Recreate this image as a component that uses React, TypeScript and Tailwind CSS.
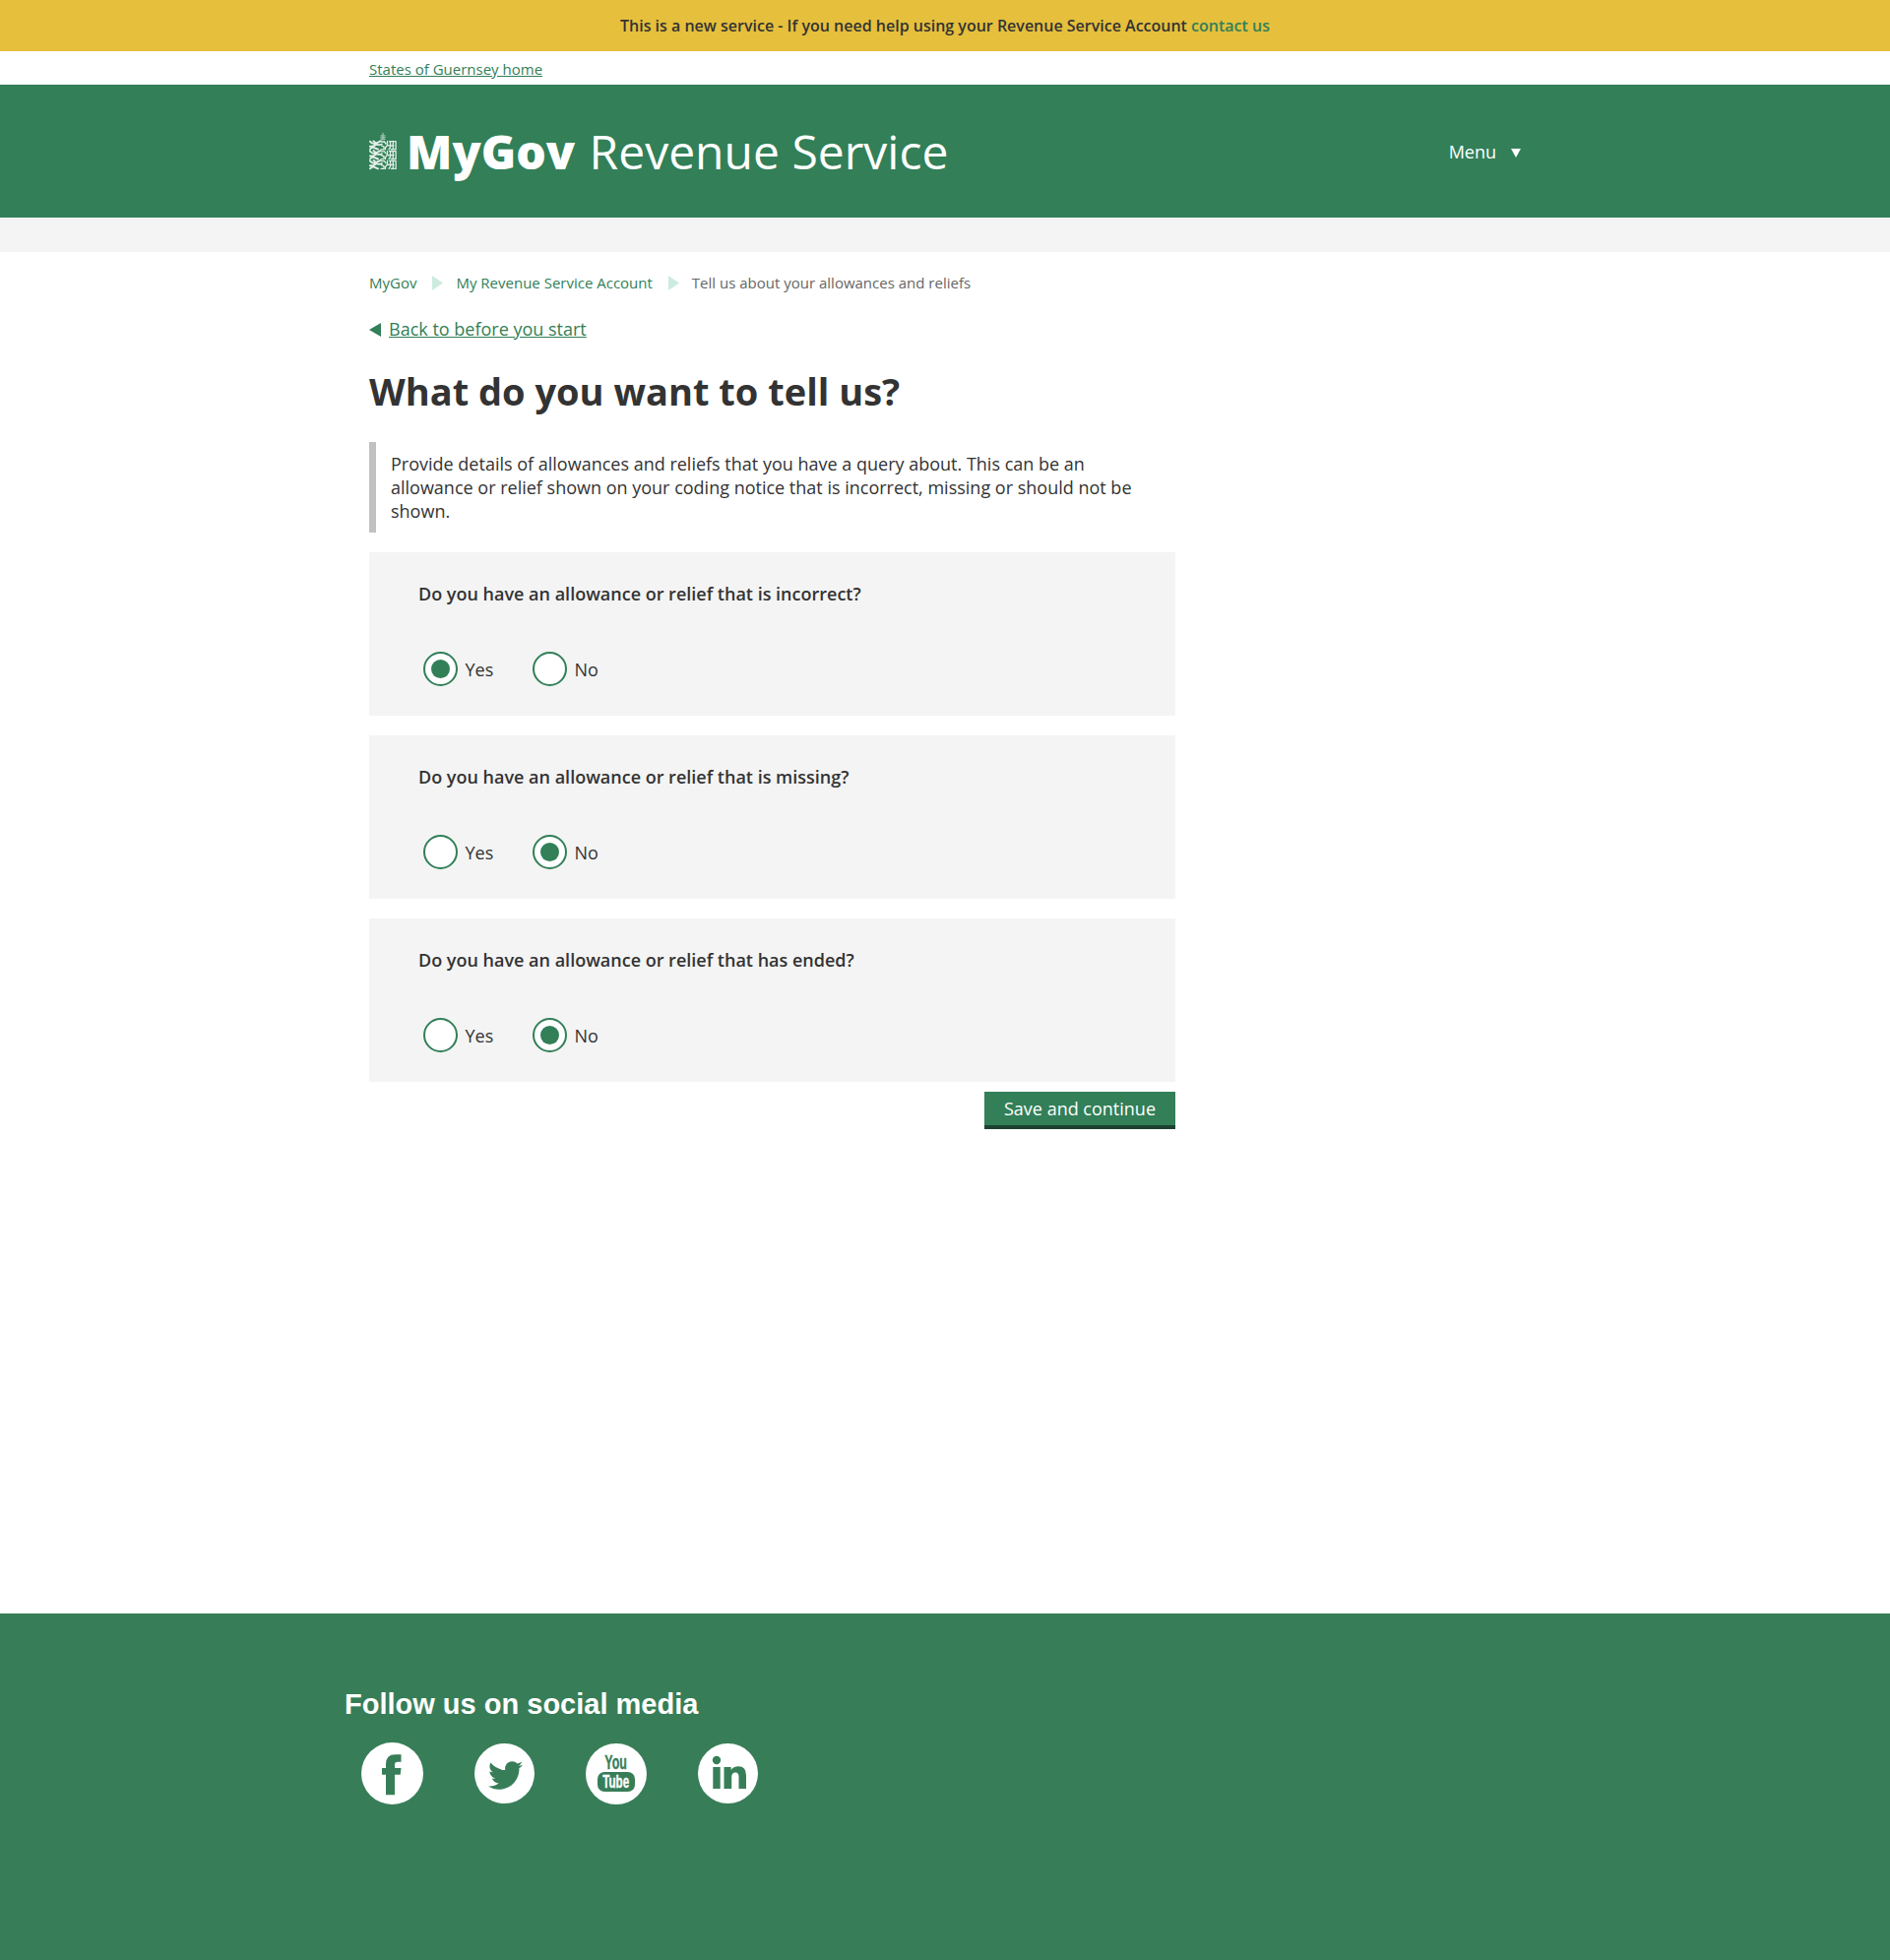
import { FaTwitter } from "react-icons/fa";

const LION_ROWS = [11.5, 21.3, 31.1];

function Crest() {
  return (
    <svg className="h-[46px] w-[28px] shrink-0" viewBox="0 0 28 46" fill="none" stroke="#e3efe8" strokeLinecap="round">
      <path d="M14 4.500v6M12 6.800l4 0M11.800 8.600h4.400M12.200 10.500h3.600" strokeWidth="1.300" opacity="0.6" />
      {LION_ROWS.map((y) => (
        <g key={y} transform={`translate(0 ${y})`}>
          <path d="M0.800 1.200q2 2.600 5 2.400M4.500 0.800q2 2 3.500 1.800l3.500-1.800M5.800 3.600q4 1.800 7 .400M0.800 6.200h3l3-1.600M1 9.200q2-2.400 4-1.600t4 1.600" strokeWidth="1.900" />
          <path d="M12.500 1.500h3l1.500 2M12.500 5.500l2.500 1v2.800h-3M18.500 1v4l-2 2.500v1.800M18 5.300h7M21.500 1.200v6l-1.500 2M24.300 1v8.200h-2M20.500 1.200h6.600M27.100 1.200v8h-1.500" strokeWidth="1.300" />
        </g>
      ))}
    </svg>
  );
}

function Crumb() {
  return (
    <svg className="h-[15px] w-[11px]" viewBox="0 0 11 15">
      <path d="M0 0L11 7.500L0 15Z" fill="#cdebdf" />
    </svg>
  );
}

function Radio({ label, checked }: { label: string; checked: boolean }) {
  return (
    <span className="flex w-[111px] items-center gap-[7.500px]">
      <span className="flex size-[35px] items-center justify-center rounded-full border-2 border-[#327f58] bg-white">
        {checked && <span className="size-[19px] rounded-full bg-[#327f58]" />}
      </span>
      <span className="pt-px leading-6">{label}</span>
    </span>
  );
}

function Question({ text, yes }: { text: string; yes: boolean }) {
  return (
    <fieldset className="h-[166px] bg-[#f4f4f4] pt-[30px] pl-[50px]">
      <p className="font-semibold leading-6">{text}</p>
      <div className="mt-[47px] flex pl-[5px]">
        <Radio label="Yes" checked={yes} />
        <Radio label="No" checked={!yes} />
      </div>
    </fieldset>
  );
}

function Social() {
  return (
    <div className="mt-[21px] flex items-center pl-[17px] text-[#377e58]">
      <svg className="size-[63px]" viewBox="0 0 63 63">
        <circle cx="31.500" cy="31.500" r="31.500" fill="#fff" />
        <path d="M25 53.300V32.700H21V26H25V22Q25 12.200 34.500 12.200H40.500V19.800H37Q34 19.800 34 22.500V26H40.500L39.700 32.700H34V53.300Z" fill="currentColor" />
      </svg>
      <span className="ml-[52px] flex size-[61px] items-center justify-center rounded-full bg-white">
        <FaTwitter className="mt-[4px] ml-px size-[35px]" />
      </span>
      <svg className="ml-[52px] size-[62px]" viewBox="0 0 62 62">
        <circle cx="31" cy="31" r="31" fill="#fff" />
        <rect x="12" y="29" width="38" height="20" rx="7" fill="currentColor" />
        <g fontFamily="Liberation Sans" fontWeight="700">
          <text transform="translate(19.300 25.500) scale(0.62 1)" fontSize="20" fill="currentColor" stroke="currentColor" strokeWidth="0.4">You</text>
          <text transform="translate(17.300 45) scale(0.61 1)" fontSize="19" fill="#fff" stroke="#fff" strokeWidth="0.4">Tube</text>
        </g>
      </svg>
      <svg className="ml-[52px] size-[61px]" viewBox="0 0 61 61">
        <circle cx="30.500" cy="30.500" r="30.500" fill="#fff" />
        <g fill="currentColor">
          <circle cx="19" cy="17" r="4.200" />
          <path d="M15.300 24H22.700V46H15.300Z" />
          <path d="M26.500 24H33.700V27Q36.200 23.300 41 23.300Q49 23.300 49 32.500V46H41.500V34Q41.500 29.500 38.200 29.500Q34.200 29.500 34.200 34V46H26.500Z" />
        </g>
      </svg>
    </div>
  );
}

export default function App() {
  return (
    <div className="flex h-[1991px] w-full flex-col bg-white font-['Open_Sans',sans-serif] text-[18px] text-[#333333]">
      <div className="flex h-[52px] items-center justify-center bg-[#e6bf3c] text-[16px] font-semibold">
        <p className="whitespace-pre">This is a new service - If you need help using your Revenue Service Account <a className="text-[#327f58]">contact us</a></p>
      </div>
      <div className="h-[34px] pt-[6px] pl-[375px] text-[15px] leading-6">
        <a className="text-[#327f58] underline">States of Guernsey home</a>
      </div>
      <header className="flex h-[135px] items-center bg-[#327f58] pr-[375px] pl-[375px] text-white">
        <Crest />
        <p className="ml-[10px] flex gap-[2px] whitespace-pre text-[48px] leading-none"><span className="font-extrabold">MyGov</span><span className="font-normal"> Revenue Service</span></p>
        <div className="ml-auto flex items-center gap-[15px]">
          <span className="mt-[2px]">Menu</span>
          <svg className="mt-[4px] h-[9px] w-[10px]" viewBox="0 0 10 9"><path d="M0 0H10L5 9Z" fill="#fff" /></svg>
        </div>
      </header>
      <div className="h-[35px] bg-[#f4f4f4]" />
      <main className="ml-[375px] flex h-[1383px] w-[819px] flex-col pt-[19px]">
        <nav className="flex items-center text-[15px] leading-6 text-[#327f58]">
          <a>MyGov</a>
          <span className="mr-[13px] ml-[16px]"><Crumb /></span>
          <a>My Revenue Service Account</a>
          <span className="mr-[13px] ml-[16px]"><Crumb /></span>
          <span className="text-[#666666]">Tell us about your allowances and reliefs</span>
        </nav>
        <a className="mt-[23px] flex items-center gap-[8px] leading-6 text-[#327f58]">
          <svg className="mt-px h-[14px] w-[12px]" viewBox="0 0 12 14"><path d="M0 7L12 0V14Z" fill="#327f58" /></svg>
          <span className="underline">Back to before you start</span>
        </a>
        <h1 className="mt-[26px] text-[38px] leading-[50px] font-bold">What do you want to tell us?</h1>
        <blockquote className="mt-[27px] h-[92px] w-[819px] border-l-[7px] border-[#c1c1c1] py-[10px] pr-[20px] pl-[15px] leading-6">
          Provide details of allowances and reliefs that you have a query about. This can be an allowance or relief shown on your coding notice that is incorrect, missing or should not be shown.
        </blockquote>
        <form className="mt-[20px] flex flex-col gap-[20px]">
          <Question text="Do you have an allowance or relief that is incorrect?" yes={true} />
          <Question text="Do you have an allowance or relief that is missing?" yes={false} />
          <Question text="Do you have an allowance or relief that has ended?" yes={false} />
        </form>
        <button className="mt-[10px] h-[38px] w-[194px] self-end border-b-4 border-[#1c422f] bg-[#327f58] text-white">Save and continue</button>
      </main>
      <footer className="flex-1 bg-[#377e58] pt-[75px] pl-[350px]">
        <h2 className="font-['Liberation_Sans',sans-serif] text-[29px] leading-[35px] font-bold text-white">Follow us on social media</h2>
        <Social />
      </footer>
    </div>
  );
}
